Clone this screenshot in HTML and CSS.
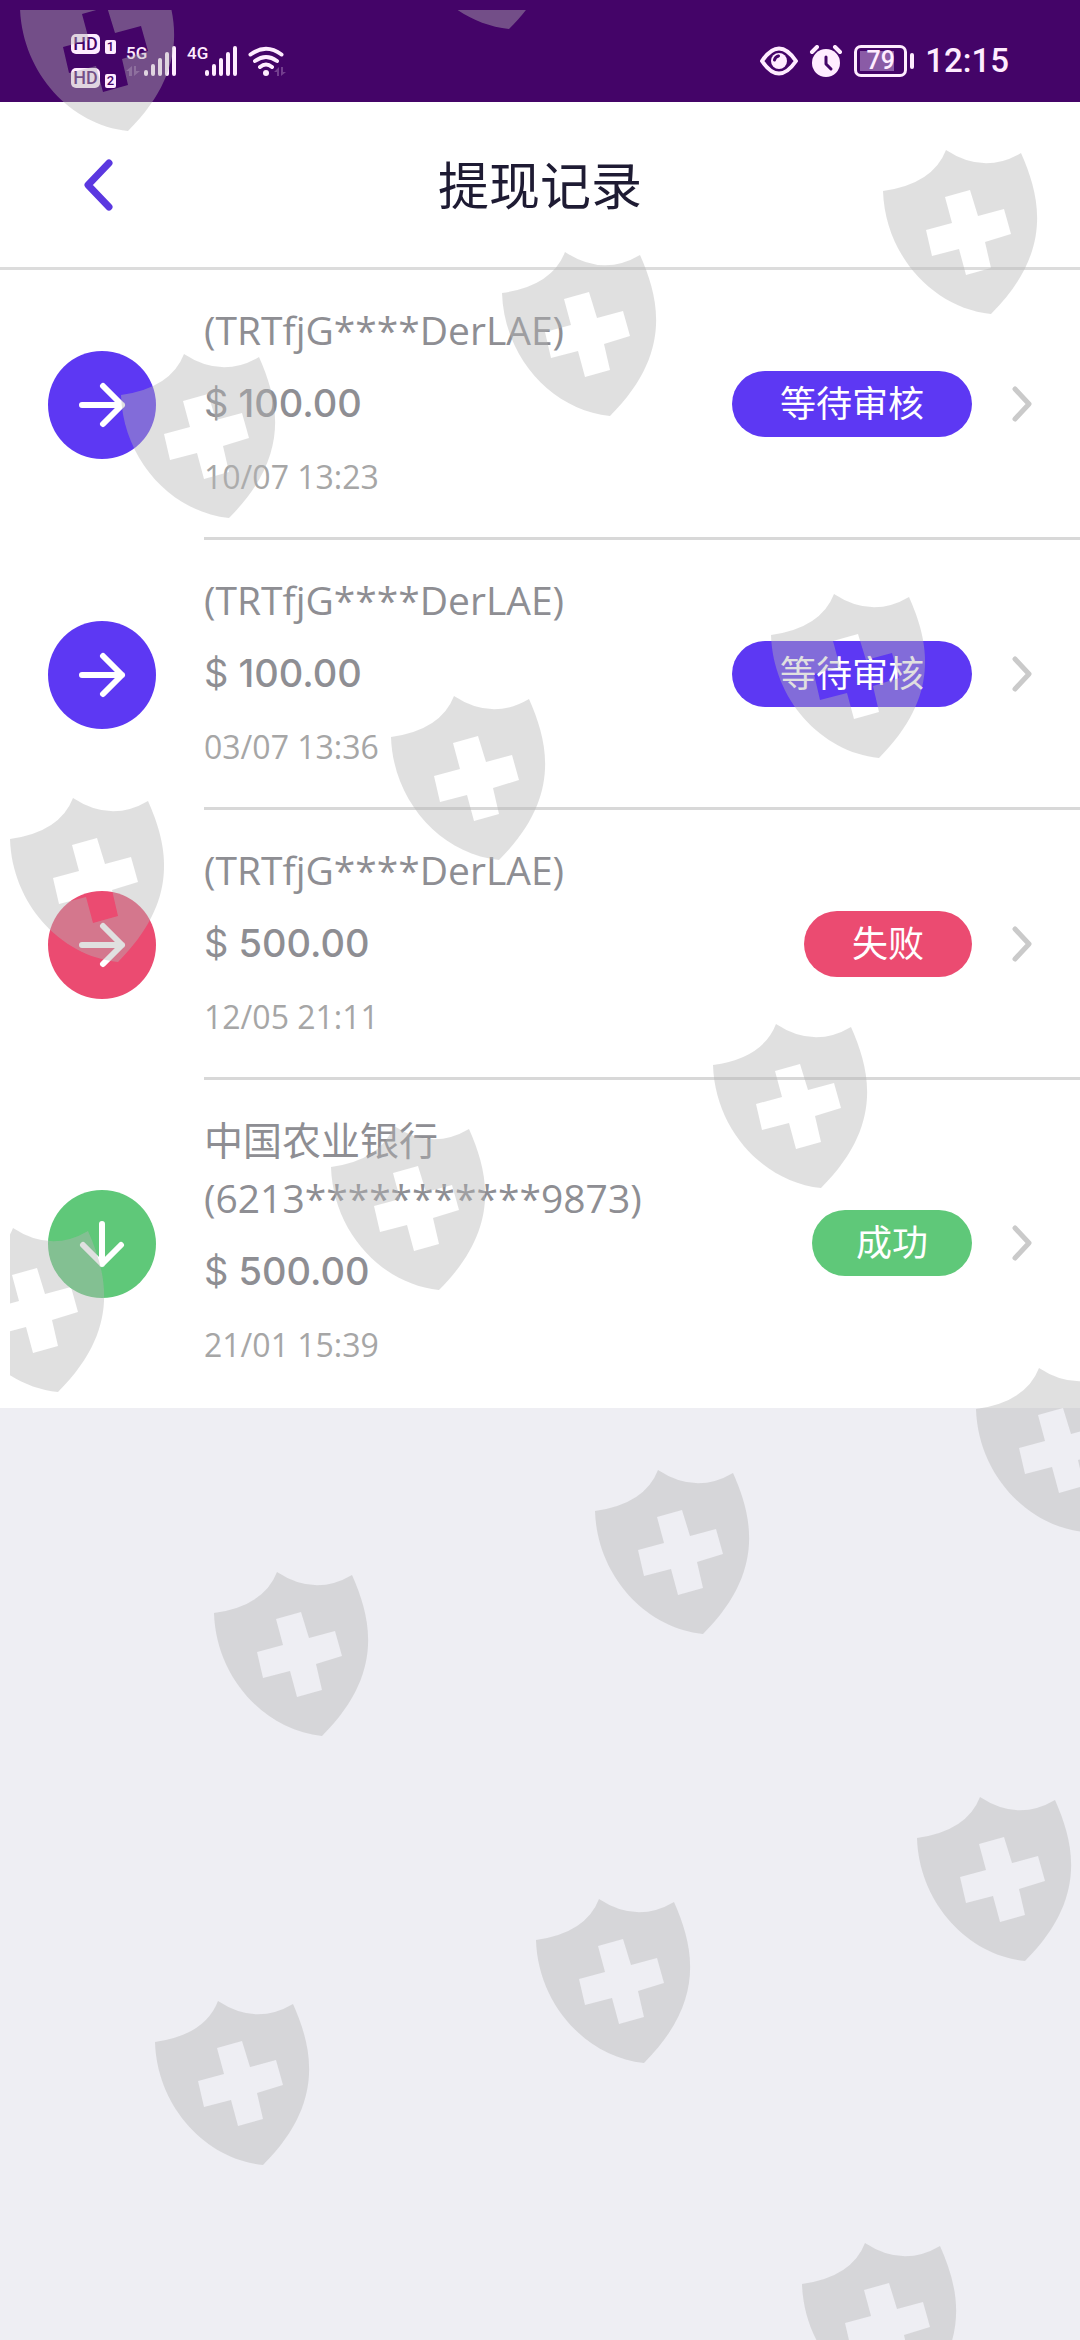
FILE: index.html
```html
<!DOCTYPE html>
<html lang="zh-CN">
<head>
    <meta charset="UTF-8">
    <meta name="viewport" content="width=device-width, initial-scale=1.0">
    <title>提现记录</title>
    <link rel="stylesheet" href="styles.css">
</head>
<body>

<div class="status-bar">
    <div class="status-left">
        <div class="hd-group">
            <div class="hd-row"><span class="hd">HD</span><span class="sim">1</span></div>
            <div class="hd-row"><span class="hd">HD</span><span class="sim">2</span></div>
        </div>
        <div class="signal">
            <div class="net">
                <span>5G</span>
                <svg class="data" width="14" height="10" viewBox="0 0 14 10"><path d="M6 0V10H3V5H0ZM8 10V0H10V5H14Z"/></svg>
            </div>
            <svg width="34" height="32" viewBox="0 0 34 32"><path d="M3 29v-2M10 29v-8M17 29V15M24 29V9M31 29V3"/></svg>
        </div>
        <div class="signal">
            <div class="net"><span>4G</span></div>
            <svg width="34" height="32" viewBox="0 0 34 32"><path d="M3 29v-2M10 29v-8M17 29V15M24 29V9M31 29V3"/></svg>
        </div>
        <svg class="wifi" width="38" height="32" viewBox="0 0 38 32">
            <path d="M2.500 9.500Q18 -2 33.500 9.500M7 16Q18 8 29 16M12 22Q18 17 24 22"/>
            <circle cx="18" cy="28" r="3"/>
            <path class="data" d="M31 22V31H29V27H26ZM33 31V22H35V27H38Z"/>
        </svg>
    </div>
    <div class="status-right">
        <svg class="eye" width="38" height="30" viewBox="0 0 38 30">
            <path d="M2 15Q19 -10 36 15Q19 40 2 15Z"/>
            <circle cx="19" cy="15" r="8"/>
            <path class="cut" d="M14.500 14q.5-3 4-4"/>
        </svg>
        <svg class="alarm" width="34" height="32" viewBox="0 0 34 32">
            <circle cx="17" cy="18" r="14"/>
            <path class="bell" d="M3 7l5-5M31 7l-5-5"/>
            <path class="cut" d="M17 12v7l5 5"/>
        </svg>
        <div class="battery"><span>79</span></div>
        <time class="clock">12:15</time>
    </div>
</div>

<header class="header">
    <button class="back" type="button" aria-label="返回">
        <svg width="34" height="56" viewBox="0 0 34 56"><path d="M27 6L6 28L27 50"/></svg>
    </button>
    <h1>提现记录</h1>
</header>

<main class="list">
    <a class="item" href="#">
        <span class="icon pending"><svg width="48" height="48" viewBox="0 0 48 48"><path d="M4 24H44M25 5L44 24L25 43"/></svg></span>
        <div class="content">
            <div class="info">
                <p class="name">(TRTfjG****DerLAE)</p>
                <p class="amount"><span>$</span> 100.00</p>
                <p class="date">10/07 13:23</p>
            </div>
            <span class="badge pending">等待审核</span>
            <svg class="arrow" width="20" height="36" viewBox="0 0 20 36"><path d="M3 3L17 18L3 33"/></svg>
        </div>
    </a>
    <a class="item" href="#">
        <span class="icon pending"><svg width="48" height="48" viewBox="0 0 48 48"><path d="M4 24H44M25 5L44 24L25 43"/></svg></span>
        <div class="content">
            <div class="info">
                <p class="name">(TRTfjG****DerLAE)</p>
                <p class="amount"><span>$</span> 100.00</p>
                <p class="date">03/07 13:36</p>
            </div>
            <span class="badge pending">等待审核</span>
            <svg class="arrow" width="20" height="36" viewBox="0 0 20 36"><path d="M3 3L17 18L3 33"/></svg>
        </div>
    </a>
    <a class="item" href="#">
        <span class="icon failed"><svg width="48" height="48" viewBox="0 0 48 48"><path d="M4 24H44M25 5L44 24L25 43"/></svg></span>
        <div class="content">
            <div class="info">
                <p class="name">(TRTfjG****DerLAE)</p>
                <p class="amount"><span>$</span> 500.00</p>
                <p class="date">12/05 21:11</p>
            </div>
            <span class="badge failed">失败</span>
            <svg class="arrow" width="20" height="36" viewBox="0 0 20 36"><path d="M3 3L17 18L3 33"/></svg>
        </div>
    </a>
    <a class="item" href="#">
        <span class="icon success"><svg width="48" height="48" viewBox="0 0 48 48"><path d="M24 4V44M5 25L24 44L43 25"/></svg></span>
        <div class="content">
            <div class="info">
                <p class="name">中国农业银行<br>(6213***********9873)</p>
                <p class="amount"><span>$</span> 500.00</p>
                <p class="date">21/01 15:39</p>
            </div>
            <span class="badge success">成功</span>
            <svg class="arrow" width="20" height="36" viewBox="0 0 20 36"><path d="M3 3L17 18L3 33"/></svg>
        </div>
    </a>
</main>

<!-- watermark -->
<svg class="watermark" aria-hidden="true">
    <defs>
        <path id="shield" fill-rule="evenodd" d="M0 41Q50 34 63 0Q101 25 138 3C158 48 170 102 108 164C50 158 2 105 0 41ZM62 47L69 73L43 80L49 106L76 99L83 125L108 118L102 92L128 84L121 59L95 66L87 40Z"/>
    </defs>
    <use href="#shield" x="10" y="-43"/>
    <use href="#shield" x="391" y="-145"/>
    <use href="#shield" x="873" y="140"/>
    <use href="#shield" x="492" y="242"/>
    <use href="#shield" x="111" y="344"/>
    <use href="#shield" x="761" y="584"/>
    <use href="#shield" x="381" y="686"/>
    <use href="#shield" x="0" y="788"/>
    <use href="#shield" x="703" y="1014"/>
    <use href="#shield" x="321" y="1116"/>
    <use href="#shield" x="-60" y="1218"/>
    <use href="#shield" x="966" y="1358"/>
    <use href="#shield" x="585" y="1460"/>
    <use href="#shield" x="204" y="1562"/>
    <use href="#shield" x="907" y="1787"/>
    <use href="#shield" x="526" y="1889"/>
    <use href="#shield" x="145" y="1991"/>
    <use href="#shield" x="792" y="2233"/>
</svg>

</body>
</html>
```
FILE: styles.css
```css
* {
    box-sizing: border-box;
}
body {
    position: relative;
    margin: 0;
    min-height: 100vh;
    background-color: #eeeef3;
    font-family: "Open Sans", "Noto Sans CJK SC", sans-serif;
    color: #8e8e93;
}
h1, p {
    margin: 0;
}
svg {
    display: block;
    fill: none;
    stroke-linecap: round;
    stroke-linejoin: round;
}

/* status bar */
.status-bar {
    display: flex;
    justify-content: space-between;
    align-items: center;
    height: 102px;
    padding: 20px 71px 0;
    background-color: #440468;
    color: #ffecff;
    font-family: Roboto, sans-serif;
}
.status-left,
.status-right {
    display: flex;
    align-items: center;
}
.status-left {
    gap: 10px;
}
.status-right {
    gap: 11px;
}
.hd-group {
    display: flex;
    flex-direction: column;
    gap: 14px;
}
.hd-row {
    display: flex;
    align-items: flex-end;
    gap: 5px;
}
.hd,
.sim {
    background-color: #ffecff;
    color: #440468;
    font-weight: 500;
    text-align: center;
}
.hd {
    width: 29px;
    border-radius: 5px;
    font-size: 18px;
    line-height: 20px;
}
.sim {
    width: 11px;
    border-radius: 2px;
    font-size: 13px;
    line-height: 14px;
}
.signal {
    display: flex;
    align-items: flex-start;
}
.net {
    display: flex;
    flex-direction: column;
    gap: 5px;
    width: 17px;
    font-size: 17px;
    font-weight: 500;
    line-height: 16px;
}
.signal svg,
.wifi,
.eye {
    stroke: #ffecff;
    stroke-width: 4;
}
.status-left .data {
    fill: rgba(255, 236, 255, 0.25);
    stroke: none;
}
.wifi circle,
.eye circle,
.alarm circle {
    fill: #ffecff;
    stroke: none;
}
.alarm .bell {
    stroke: #ffecff;
    stroke-width: 4;
}
.status-right .cut {
    stroke: #440468;
    stroke-width: 3;
}
.battery {
    position: relative;
    width: 53px;
    height: 32px;
    margin-right: 7px;
    border: 3px solid #ffecff;
    border-radius: 7px;
    background: linear-gradient(#8a5ba6, #8a5ba6) 3px 3px / 34px 20px no-repeat;
    font-size: 25px;
    font-weight: 500;
    line-height: 26px;
    text-align: center;
}
.battery::after {
    content: "";
    position: absolute;
    top: 5px;
    right: -10px;
    width: 4px;
    height: 16px;
    border-radius: 2px;
    background-color: #ffecff;
}
.clock {
    font-size: 33px;
    font-weight: 500;
    line-height: 36px;
}

/* header */
.header {
    display: grid;
    grid-template-columns: 116px 1fr 116px;
    align-items: center;
    height: 168px;
    background-color: #fff;
    border-bottom: 3px solid #dcdcdc;
}
.back {
    justify-self: end;
    padding: 0;
    border: none;
    background: none;
    cursor: pointer;
}
.back svg {
    stroke: #5b38e0;
    stroke-width: 7;
}
h1 {
    font-size: 51px;
    font-weight: 400;
    line-height: 60px;
    text-align: center;
    color: #1e1b33;
}

/* records */
.list {
    background-color: #fff;
}
.item {
    display: flex;
    align-items: center;
    gap: 48px;
    padding-left: 48px;
    color: inherit;
    text-decoration: none;
}
.icon {
    display: flex;
    justify-content: center;
    align-items: center;
    width: 108px;
    height: 108px;
    border-radius: 50%;
}
.icon svg {
    stroke: #fff;
    stroke-width: 6;
}
.content {
    flex: 1;
    display: flex;
    align-items: center;
    padding: 31px 48px 30px 0;
    border-bottom: 3px solid #d8d8d8;
}
.item:last-child .content {
    border-color: #fff;
}
.info {
    flex: 1;
    display: flex;
    flex-direction: column;
    gap: 15px;
}
.name {
    font-size: 39px;
    line-height: 58px;
}
.amount {
    font-family: Inter, sans-serif;
    font-size: 38px;
    font-weight: 500;
    line-height: 58px;
}
.amount span {
    font-weight: 400;
}
.date {
    font-size: 32px;
    line-height: 60px;
    color: #a6a6a6;
}
.badge {
    padding: 0 48px;
    border-radius: 33px;
    color: #fff;
    font-size: 36px;
    line-height: 66px;
}
.pending {
    background-color: #5d38f3;
}
.failed {
    background-color: #eb4b71;
}
.success {
    background-color: #5fc879;
}
.badge.success {
    padding: 0 44px;
}
.arrow {
    margin-left: 40px;
    stroke: #cacaca;
    stroke-width: 5;
}

.watermark {
    position: absolute;
    top: 10px;
    left: 10px;
    width: calc(100% - 10px);
    height: calc(100% - 10px);
    overflow: hidden;
    fill: rgba(180, 182, 180, 0.42);
    pointer-events: none;
}
```
